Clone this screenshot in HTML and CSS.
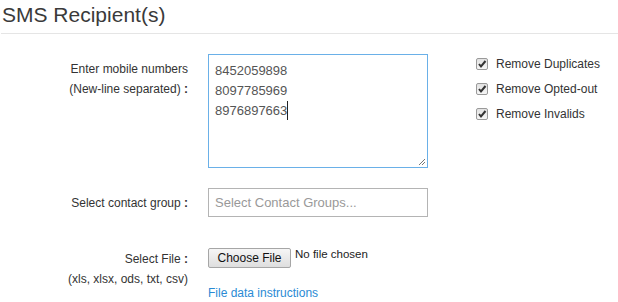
FILE: index.html
```html
<!DOCTYPE html>
<html lang="en">
  <head>
    <title>SMS Recipients</title>
    <meta name="viewport" content="width=device-width, initial-scale=1">
    <link rel="stylesheet" href="styles.css">
  </head>
  <body>
    <div class="panel">
      <h2 class="panel-title">SMS Recipient(s)</h2>

      <!-- mobile numbers -->
      <div class="row">
        <div class="label">Enter mobile numbers<br>(New-line separated) <b>:</b></div>
        <div class="numbers">
          <div>8452059898</div>
          <div>8097785969</div>
          <div>8976897663<span class="caret"></span></div>
          <svg class="grip" width="8" height="8" viewBox="0 0 8 8">
            <path d="M1 7 L7 1 M4 7 L7 4" stroke="#777" stroke-width="1" fill="none"/>
          </svg>
        </div>
        <div class="options">
          <label class="option"><span class="check"><svg width="10" height="10" viewBox="0 0 10 10"><path d="M2 5 L4 7.5 L8.5 2" stroke="#333" stroke-width="2" fill="none"/></svg></span>Remove Duplicates</label>
          <label class="option"><span class="check"><svg width="10" height="10" viewBox="0 0 10 10"><path d="M2 5 L4 7.5 L8.5 2" stroke="#333" stroke-width="2" fill="none"/></svg></span>Remove Opted-out</label>
          <label class="option"><span class="check"><svg width="10" height="10" viewBox="0 0 10 10"><path d="M2 5 L4 7.5 L8.5 2" stroke="#333" stroke-width="2" fill="none"/></svg></span>Remove Invalids</label>
        </div>
      </div>

      <!-- contact group -->
      <div class="row">
        <div class="label">Select contact group <b>:</b></div>
        <div class="group-input">Select Contact Groups...</div>
      </div>

      <!-- file upload -->
      <div class="row row-file">
        <div class="label">Select File <b>:</b><br>(xls, xlsx, ods, txt, csv)</div>
        <div class="file-box">
          <div class="file-line">
            <button type="button" class="file-btn">Choose File</button>
            <span class="file-name">No file chosen</span>
          </div>
          <a href="#" class="file-help">File data instructions</a>
        </div>
      </div>
    </div>
  </body>
</html>
```

FILE: styles.css
```css
body {
  margin: 0;
  font-family: "Liberation Sans", Arial, sans-serif;
  color: #333;
  background: #fff;
}
.panel {
  padding-left: 2px;
}
.panel-title {
  margin: 3px 0 20px -1px;
  padding-left: 1px;
  font-size: 21px;
  line-height: 24px;
  font-weight: normal;
  color: #3a3a3a;
  padding-bottom: 6px;
  border-bottom: 1px solid #e5e5e5;
}
.row {
  display: flex;
  align-items: flex-start;
  gap: 20px;
  margin-bottom: 20px;
}
.label {
  width: 186px;
  text-align: right;
  font-size: 12px;
  line-height: 20px;
  padding-top: 5px;
  color: #333;
}
.numbers {
  position: relative;
  box-sizing: border-box;
  width: 220px;
  height: 114px;
  border: 1px solid #6ab0e8;
  padding: 6px 6px;
  font-size: 13px;
  line-height: 20px;
  color: #555;
}
.caret {
  display: inline-block;
  width: 1px;
  height: 19px;
  background: #222;
  vertical-align: -5px;
}
.grip {
  position: absolute;
  right: 1px;
  bottom: 1px;
}
.options {
  padding-left: 28px;
  display: flex;
  flex-direction: column;
  gap: 5px;
}
.option {
  display: flex;
  align-items: center;
  font-size: 12px;
  line-height: 20px;
  color: #333;
}
.check {
  box-sizing: border-box;
  width: 12px;
  height: 12px;
  margin-right: 8px;
  border: 1px solid #9a9a9a;
  border-radius: 2px;
  background: linear-gradient(#e2e2e2, #f6f6f6);
  display: flex;
  align-items: center;
  justify-content: center;
}
.group-input {
  box-sizing: border-box;
  width: 220px;
  height: 29px;
  border: 1px solid #b4b4b4;
  padding: 0 6px;
  font-size: 13px;
  line-height: 27px;
  color: #999;
}
.row-file {
  padding-top: 11px;
  margin-bottom: 0;
}
.row-file .label {
  padding-top: 1px;
}
.file-line {
  display: flex;
  align-items: flex-start;
  gap: 4px;
}
.file-btn {
  box-sizing: border-box;
  width: 83px;
  height: 20px;
  padding: 0;
  font-family: "Liberation Sans", Arial, sans-serif;
  font-size: 12px;
  color: #111;
  border: 1px solid #a6a6a6;
  border-radius: 2px;
  background: linear-gradient(#f6f6f6, #dedede);
}
.file-name {
  font-size: 11.5px;
  line-height: 12px;
  color: #222;
}
.file-help {
  display: block;
  margin-top: 15px;
  font-size: 12px;
  line-height: 20px;
  color: #2a8ad4;
  text-decoration: none;
}
```
